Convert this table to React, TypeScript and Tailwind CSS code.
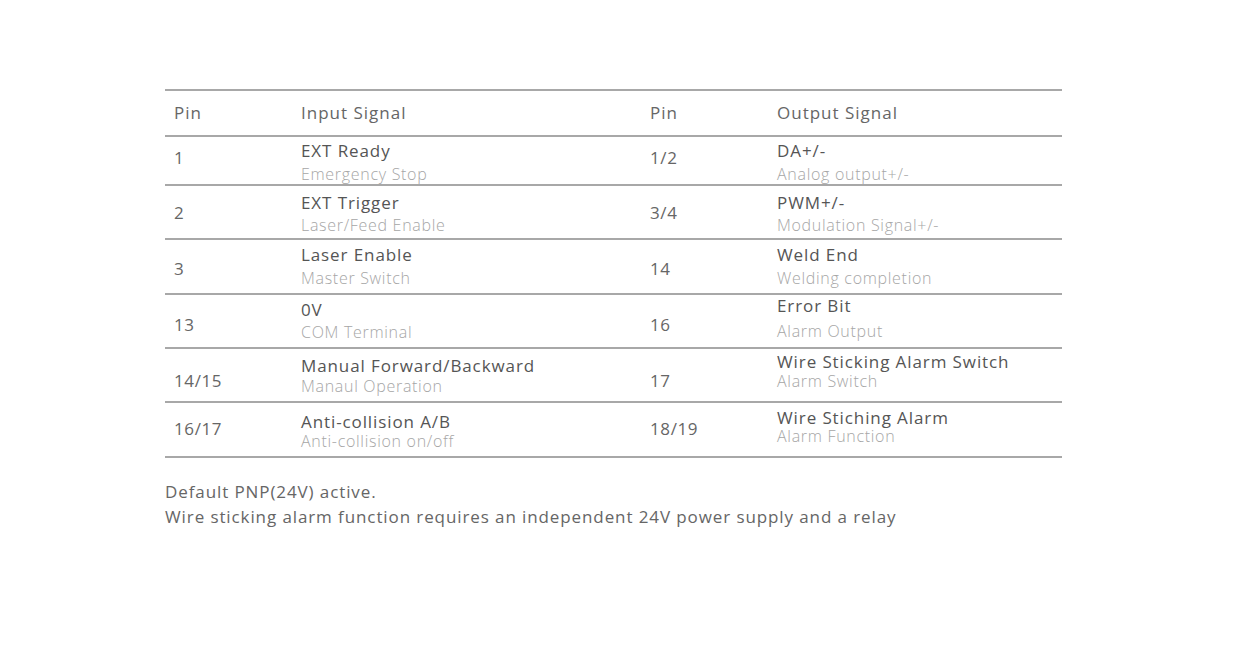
import React from "react";

type Row = {
  h: string;
  inPin: string;
  inTitle: string;
  inSub: string;
  outPin: string;
  outTitle: string;
  outSub: string;
  pinPad: string;
  inPad: string;
  outPad: string;
  outGap: string;
  inGap: string;
};

const rows: Row[] = [
  { h: "h-[49px]", inPin: "1", inTitle: "EXT Ready", inSub: "Emergency Stop", outPin: "1/2", outTitle: "DA+/-", outSub: "Analog output+/-", pinPad: "pt-[10px]", inPad: "pt-[5px]", outPad: "pt-[5px]", inGap: "mt-[5px]", outGap: "mt-[5px]" },
  { h: "h-[54px]", inPin: "2", inTitle: "EXT Trigger", inSub: "Laser/Feed Enable", outPin: "3/4", outTitle: "PWM+/-", outSub: "Modulation Signal+/-", pinPad: "pt-[16px]", inPad: "pt-[8px]", outPad: "pt-[8px]", inGap: "mt-[4px]", outGap: "mt-[4px]" },
  { h: "h-[55px]", inPin: "3", inTitle: "Laser Enable", inSub: "Master Switch", outPin: "14", outTitle: "Weld End", outSub: "Welding completion", pinPad: "pt-[18px]", inPad: "pt-[6px]", outPad: "pt-[6px]", inGap: "mt-[5px]", outGap: "mt-[5px]" },
  { h: "h-[54px]", inPin: "13", inTitle: "0V", inSub: "COM Terminal", outPin: "16", outTitle: "Error Bit", outSub: "Alarm Output", pinPad: "pt-[19px]", inPad: "pt-[6px]", outPad: "pt-[2px]", inGap: "mt-[4px]", outGap: "mt-[7px]" },
  { h: "h-[54px]", inPin: "14/15", inTitle: "Manual Forward/Backward", inSub: "Manaul Operation", outPin: "17", outTitle: "Wire Sticking Alarm Switch", outSub: "Alarm Switch", pinPad: "pt-[21px]", inPad: "pt-[8px]", outPad: "pt-[4px]", inGap: "mt-[2px]", outGap: "mt-[1px]" },
  { h: "h-[55px]", inPin: "16/17", inTitle: "Anti-collision A/B", inSub: "Anti-collision on/off", outPin: "18/19", outTitle: "Wire Stiching Alarm", outSub: "Alarm Function", pinPad: "pt-[15px]", inPad: "pt-[10px]", outPad: "pt-[6px]", inGap: "mt-[1px]", outGap: "mt-[0px]" },
];

export default function App() {
  return (
    <div
      className="w-[1238px] h-[654px] bg-white text-[#555]"
      style={{ fontFamily: '"Open Sans", "Noto Sans", sans-serif' }}
    >
      <div className="pt-[89px] pl-[165px]">
        <div className="w-[897px] border-t-2 border-[#a8a8a8]">
          <div className="flex h-[46px] items-center border-b-2 border-[#a8a8a8] text-[17px] tracking-[1px] text-[#666]">
            <div className="w-[136px] pl-[9px]">Pin</div>
            <div className="w-[349px]">Input Signal</div>
            <div className="w-[127px]">Pin</div>
            <div className="flex-1">Output Signal</div>
          </div>
          {rows.map((r, i) => (
            <div key={i} className={`flex ${r.h} border-b-2 border-[#a8a8a8]`}>
              <div className={`w-[136px] pl-[9px] ${r.pinPad} text-[17px] leading-[22px] tracking-[0.6px] text-[#666]`}>{r.inPin}</div>
              <div className={`w-[349px] ${r.inPad} flex flex-col`}>
                <div className="whitespace-nowrap text-[17px] leading-[18px] tracking-[0.9px] text-[#555]">{r.inTitle}</div>
                <div className={`${r.inGap} whitespace-nowrap text-[16px] leading-[18px] font-light tracking-[0.7px] text-[#a6a6a6]`}>{r.inSub}</div>
              </div>
              <div className={`w-[127px] ${r.pinPad} text-[17px] leading-[22px] tracking-[0.6px] text-[#666]`}>{r.outPin}</div>
              <div className={`flex-1 ${r.outPad} flex flex-col`}>
                <div className="whitespace-nowrap text-[17px] leading-[18px] tracking-[0.9px] text-[#555]">{r.outTitle}</div>
                <div className={`${r.outGap} whitespace-nowrap text-[16px] leading-[18px] font-light tracking-[0.7px] text-[#a6a6a6]`}>{r.outSub}</div>
              </div>
            </div>
          ))}
        </div>
        <div className="mt-[21px] text-[17px] leading-[25px] tracking-[0.9px] text-[#666]">
          <div>Default PNP(24V) active.</div>
          <div>Wire sticking alarm function requires an independent 24V power supply and a relay</div>
        </div>
      </div>
    </div>
  );
}
